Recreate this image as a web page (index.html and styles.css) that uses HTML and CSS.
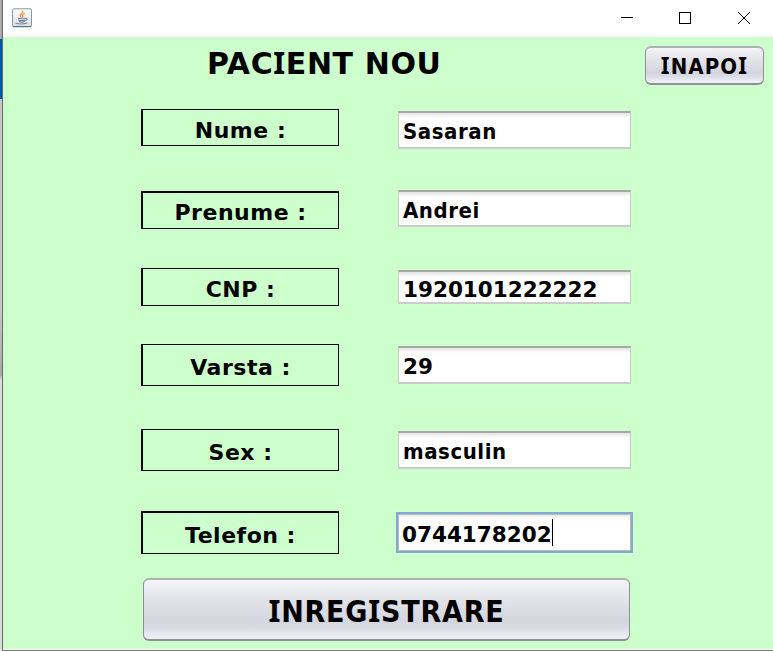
FILE: index.html
```
<!DOCTYPE html>
<html lang="ro">
<head>
<meta charset="utf-8">
<title>Pacient nou</title>
<link rel="stylesheet" href="styles.css">
</head>
<body>
<div class="edge"></div>
<div class="window">
  <header class="titlebar">
    <svg class="java" width="20" height="20" viewBox="0 0 20 20">
      <defs><linearGradient id="g" x2="0" y2="1"><stop stop-color="#fff"/><stop offset="1" stop-color="#dfdfe1"/></linearGradient></defs>
      <rect x=".5" y=".8" width="19" height="18" rx="1.5" fill="url(#g)" stroke="#7e98ac"/>
      <path d="M1 18.500h18" stroke="#54728a"/>
      <g fill="none" stroke-linecap="round">
        <path d="M10.800 3.200c1 2-3.700 2.800-2.500 4.800l1 1.300M12.300 5.500c-2.500 1.200-2 1.800-1.400 3.500" stroke="#ef8b38" stroke-width="1.300"/>
        <path d="M6 10.300c2 .6 5 .6 7-.1M6.500 12c2 .7 4.500.7 6 0M7.200 13.600c1.600.6 3.600.6 5 0M13.500 10.300c2.500-.5 1.800 2-.3 2.500M4 15.200c2 1 8.500 1 11-.1" stroke="#6f8ba3" stroke-width="1.100"/>
      </g>
    </svg>
    <svg class="controls" width="132" height="14" viewBox="0 0 132 14" fill="none" stroke="#000">
      <path d="M1 6.500h12"/>
      <rect x="59.500" y="1.500" width="11" height="11"/>
      <path d="M118 1l12 12M130 1L118 13"/>
    </svg>
  </header>
  <main class="content">
    <div class="heading">
      <h1>PAC<span class="serif-i">I</span>ENT NOU</h1>
      <button class="btn back"><span><span class="serif-i">I</span>NAPO<span class="serif-i">I</span></span></button>
    </div>
    <div class="form">
      <div class="labels">
        <div class="label nume"><span>Nume :</span></div>
        <div class="label prenume"><span>Prenume :</span></div>
        <div class="label cnp"><span>CNP :</span></div>
        <div class="label varsta"><span>Varsta :</span></div>
        <div class="label sex"><span>Sex :</span></div>
        <div class="label telefon"><span>Telefon :</span></div>
      </div>
      <div class="fields">
        <div class="field f-nume"><span>Sasaran</span></div>
        <div class="field f-prenume"><span>Andrei</span></div>
        <div class="field number f-cnp"><span>1920101222222</span></div>
        <div class="field number f-varsta"><span>29</span></div>
        <div class="field f-sex"><span>masculin</span></div>
        <div class="field number f-telefon"><span>0744178202</span><i class="caret"></i></div>
      </div>
    </div>
    <button class="btn submit"><span><span class="serif-i">I</span>NREG<span class="serif-i">I</span>STRARE</span></button>
  </main>
</div>
</body>
</html>
```
FILE: styles.css
```
* { box-sizing: border-box; }
body { margin: 0; height: 651px; display: flex; overflow: hidden; background: #fff; color: #000; font-family: "DejaVu Sans", sans-serif; font-weight: bold; }
.edge { width: 2px; background: linear-gradient(#aaa 0 39px, #0058a8 39px 99px, #c8c8c8 99px 310px, #a8a8a8 375px, #ddd 380px 100%); }
.window { flex: 1; display: flex; flex-direction: column; border-left: 1px solid #686868; border-bottom: 1px solid #747474; }
.titlebar { height: 37px; background: #fff; display: flex; align-items: flex-start; justify-content: space-between; padding: 8px 21px 0 9px; }
.controls { margin-top: 3px; }
.content { height: 612px; background: #cfc; }
.heading { height: 72px; display: flex; align-items: flex-start; justify-content: space-between; padding: 9px 8px 0 204px; }
h1 { margin: 0; font: bold 30px/36px "DejaVu Sans", sans-serif; letter-spacing: .6px; white-space: nowrap; }
.serif-i { font-family: "Noto Sans", sans-serif; font-size: 1.02em; line-height: 1; }
.btn { display: flex; align-items: center; justify-content: center; margin: 0; padding: 0; border: 2px solid #8e9095; border-top-color: #adb0b4; border-left-width: 1px; border-right-width: 1px; border-radius: 6px; background: linear-gradient(#f4f4f6, #e2e3e7 35%, #d4d6df 68%, #d8dae3 78%, #f0f1f8); font-family: "DejaVu Sans Condensed", sans-serif; font-weight: bold; color: #000; white-space: nowrap; }
.back { width: 119px; height: 39px; font-size: 22px; letter-spacing: 1.1px; padding-top: 2px; margin-right: 1px; }
.form { display: flex; padding-left: 138px; height: 469px; }
.labels { width: 198px; margin-right: 59px; }
.label { display: flex; justify-content: center; align-items: center; border: 1px solid #000; border-left-width: 2px; font-size: 22px; line-height: 26px; padding-top: 5px; letter-spacing: .5px; white-space: nowrap; }
.nume { height: 37px; padding-top: 6px; }
.prenume { height: 38px; margin-top: 45px; border-top-width: 2px; }
.cnp { height: 38px; margin-top: 39px; }
.varsta { height: 42px; margin-top: 38px; }
.sex { height: 42px; margin-top: 43px; }
.telefon { height: 43px; margin-top: 40px; border-top-width: 2px; }
.fields { width: 233px; padding-top: 2px; }
.field { display: flex; align-items: center; background: linear-gradient(#e4e4e6, #fff 5px); border: 1px solid #c9ccca; border-top: 2px solid #a5a6a8; border-bottom-width: 2px; padding: 4px 0 0 4px; font: bold 22px/26px "DejaVu Sans Condensed", sans-serif; letter-spacing: .55px; white-space: nowrap; }
.number { font: bold 21.5px/26px "DejaVu Sans", sans-serif; letter-spacing: 0; }
.f-nume { height: 38px; }
.f-prenume { height: 37px; margin-top: 41px; }
.f-cnp { height: 34px; margin-top: 43px; padding-top: 5px; }
.f-varsta { height: 38px; margin-top: 42px; }
.f-sex { height: 38px; margin-top: 47px; }
.f-telefon { width: 237px; height: 41px; margin: 43px 0 0 -2px; border: 2px solid #82a9d2; box-shadow: inset 0 0 0 1px #bbb; }
.caret { width: 1px; height: 27px; margin-top: -4px; background: #000; }
.submit { width: 487px; height: 63px; margin-left: 140px; font-size: 30px; letter-spacing: .8px; padding-top: 3px; }
```
